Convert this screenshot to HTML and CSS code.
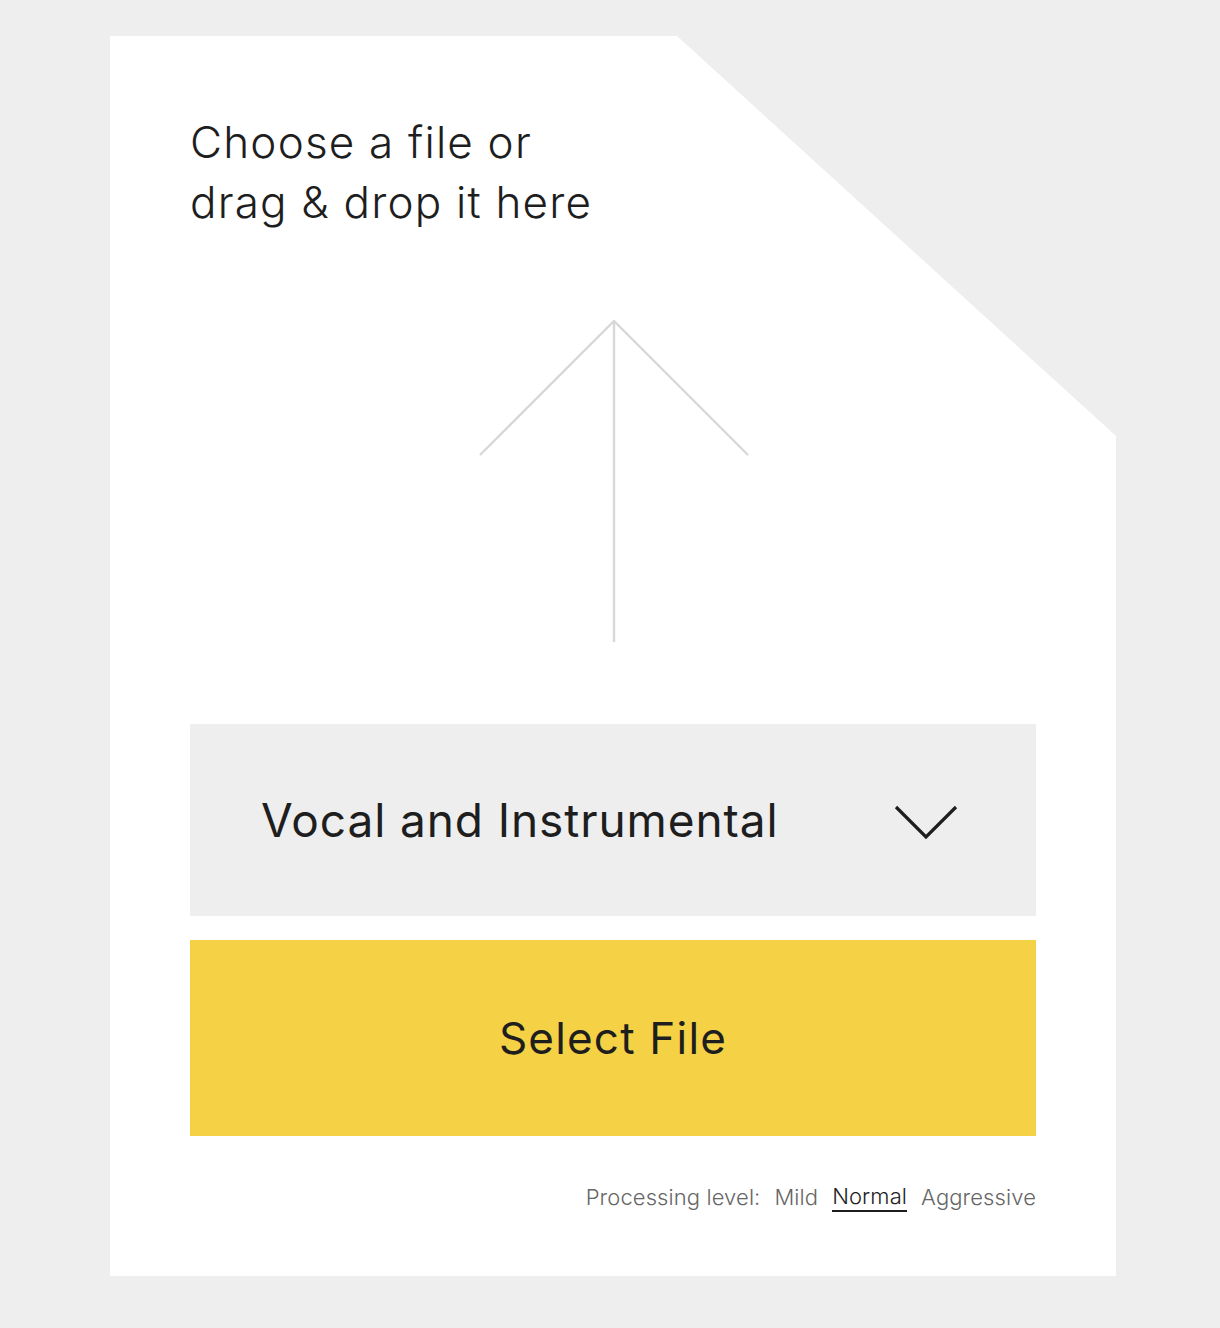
FILE: index.html
```html
<!DOCTYPE html>
<html lang="en">
<head>
<meta charset="utf-8">
<title>Upload</title>
<link rel="stylesheet" href="styles.css">
</head>
<body>
<div class="page">
  <div class="card">
    <h1 class="title">Choose a file or<br>drag &amp; drop it here</h1>
    <div class="arrow-wrap">
      <svg class="arrow" width="272" height="322" viewBox="0 0 272 322" aria-hidden="true">
        <path d="M2 135 L136 1 L270 135 M136 1 L136 322" fill="none" stroke="#d8d8d8" stroke-width="2.4"/>
      </svg>
    </div>
    <div class="select">
      <span class="select-label">Vocal and Instrumental</span>
      <svg class="chevron" width="64" height="36" viewBox="0 0 64 36" aria-hidden="true">
        <path d="M2 3 L32 33 L62 3" fill="none" stroke="#1e1e1e" stroke-width="3.2"/>
      </svg>
    </div>
    <button class="btn">Select File</button>
    <div class="levels">
      <span class="levels-label">Processing level:</span>
      <span class="level">Mild</span>
      <span class="level active">Normal</span>
      <span class="level">Aggressive</span>
    </div>
  </div>
</div>
</body>
</html>
```
FILE: styles.css
```css
html, body {
  margin: 0;
  padding: 0;
  background: #eeeeee;
  font-family: Inter, "Liberation Sans", sans-serif;
}
.page {
  padding: 36px 0 0 110px;
}
.card {
  width: 1006px;
  height: 1240px;
  box-sizing: border-box;
  background: #ffffff;
  padding: 76px 80px 0 80px;
  clip-path: polygon(0 0, 567px 0, 1006px 400px, 1006px 100%, 0 100%);
  display: flex;
  flex-direction: column;
}
.title {
  margin: 0;
  font-size: 44px;
  line-height: 60px;
  font-weight: 300;
  color: #1e1e1e;
  letter-spacing: 1.2px;
}
.arrow-wrap {
  display: flex;
  justify-content: center;
  margin-top: 88px;
  height: 322px;
}
.arrow {
  display: block;
  margin-left: 2px;
}
.select {
  margin-top: 82px;
  height: 192px;
  background: #eeeeee;
  display: flex;
  align-items: center;
  justify-content: space-between;
  padding: 0 78px 0 73px;
}
.select-label {
  font-size: 46px;
  font-weight: 400;
  color: #1e1e1e;
  letter-spacing: 0.9px;
  margin-left: -2px;
}
.chevron {
  display: block;
  margin-top: 4px;
}
.btn {
  margin-top: 24px;
  height: 196px;
  border: 0;
  background: #f5d245;
  font-family: inherit;
  font-size: 44px;
  font-weight: 400;
  color: #1e1e1e;
  letter-spacing: 1.2px;
  padding: 0;
}
.levels {
  margin-top: 46px;
  display: flex;
  justify-content: flex-end;
  gap: 14px;
  font-size: 22px;
  font-weight: 300;
  color: #666666;
  line-height: 30px;
  letter-spacing: 0.1px;
}
.level.active {
  color: #1e1e1e;
  border-bottom: 2px solid #1e1e1e;
  line-height: 28px;
}
```
